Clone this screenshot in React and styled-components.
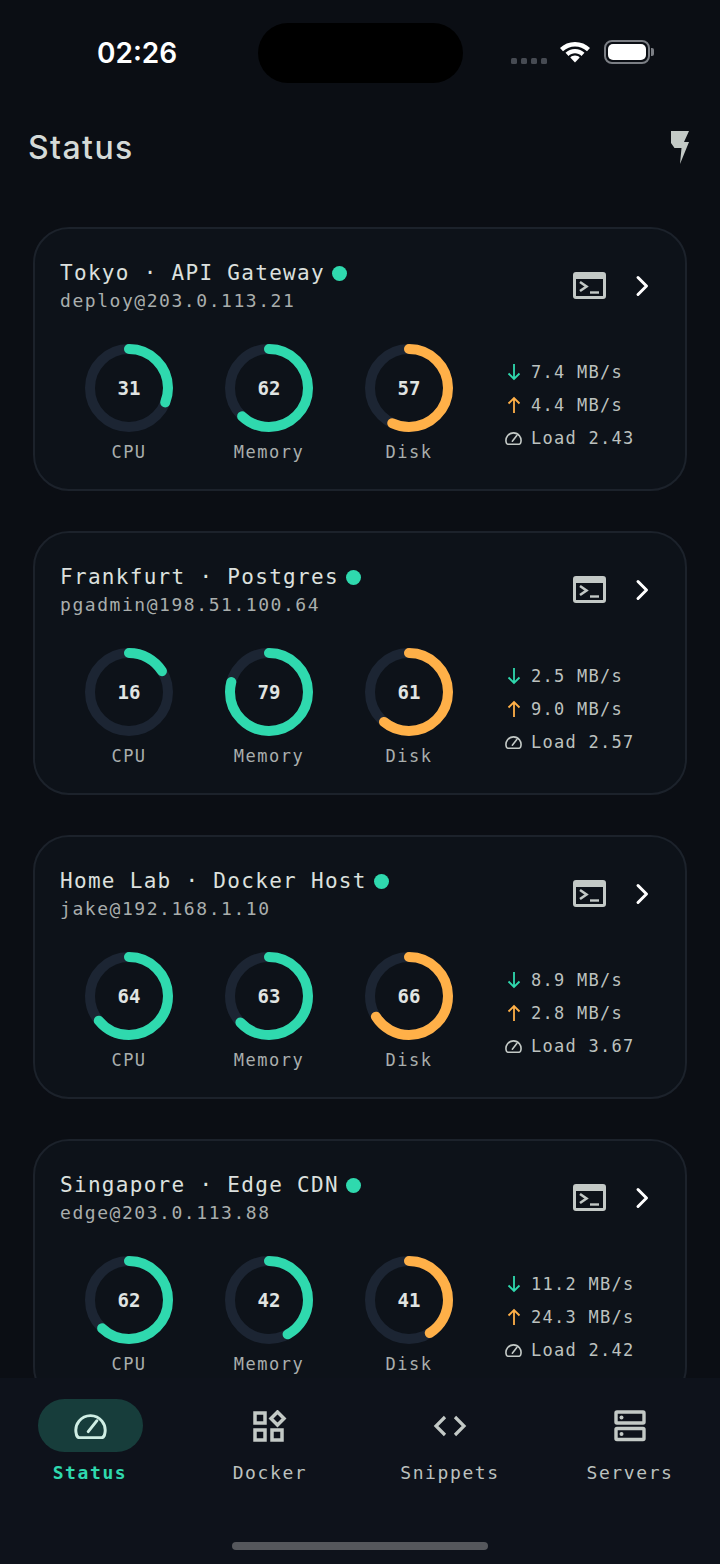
import React from 'react'
import styled, { createGlobalStyle } from 'styled-components'

const TEAL = '#2fd9ae'
const ORANGE = '#ffb048'

const servers = [
  { name: 'Tokyo · API Gateway', login: 'deploy@203.0.113.21', cpu: 31, mem: 62, disk: 57, down: '7.4', up: '4.4', load: '2.43' },
  { name: 'Frankfurt · Postgres', login: 'pgadmin@198.51.100.64', cpu: 16, mem: 79, disk: 61, down: '2.5', up: '9.0', load: '2.57' },
  { name: 'Home Lab · Docker Host', login: 'jake@192.168.1.10', cpu: 64, mem: 63, disk: 66, down: '8.9', up: '2.8', load: '3.67' },
  { name: 'Singapore · Edge CDN', login: 'edge@203.0.113.88', cpu: 62, mem: 42, disk: 41, down: '11.2', up: '24.3', load: '2.42' },
]

function GaugeIcon({ size, color, width }) {
  return (
    <svg width={size} height={(size * 30) / 36} viewBox="0 0 36 30" fill="none" stroke={color} strokeWidth={width} strokeLinejoin="round">
      <path d="M6 28H30Q33 28 33.600 23.500A16 16 0 1 0 2.400 23.500Q3 28 6 28z" />
      <path d="M15.500 21.500L25 9.500" strokeLinecap="round" />
    </svg>
  )
}

function Ring({ value, color }) {
  const r = 39
  const c = 2 * Math.PI * r
  return (
    <svg width="90" height="90" viewBox="0 0 90 90">
      <circle cx="45" cy="45" r={r} fill="none" stroke="#1c2533" strokeWidth="10" />
      <circle
        cx="45" cy="45" r={r} fill="none" stroke={color} strokeWidth="10" strokeLinecap="round"
        strokeDasharray={`${(c * value) / 100} ${c}`}
        transform="rotate(-90 45 45)"
      />
    </svg>
  )
}

function Meter({ value, label, color }) {
  return (
    <MeterBox>
      <RingWrap>
        <Ring value={value} color={color} />
        <RingValue>{value}</RingValue>
      </RingWrap>
      <MeterLabel>{label}</MeterLabel>
    </MeterBox>
  )
}

function ServerCard({ s }) {
  return (
    <Card>
      <CardTop>
        <div>
          <TitleRow>
            <Title>{s.name}</Title>
            <Dot />
          </TitleRow>
          <Login>{s.login}</Login>
        </div>
        <Actions>
          <svg width="33" height="27" viewBox="0 0 33 27">
            <path fillRule="evenodd" fill="#c3c9c6" d="M3 0h27a3 3 0 0 1 3 3v21a3 3 0 0 1-3 3H3a3 3 0 0 1-3-3V3a3 3 0 0 1 3-3zM3 7v17h27V7z" />
            <path d="M7 10l6.500 4.500L7 19" fill="none" stroke="#c3c9c6" strokeWidth="2.600" />
            <path d="M17 20.500h9" fill="none" stroke="#c3c9c6" strokeWidth="2.400" />
          </svg>
          <svg width="16" height="22" viewBox="0 0 16 22" fill="none">
            <path d="M3 2.500L11.500 11 3 19.500" stroke="#fff" strokeWidth="3" strokeLinecap="round" strokeLinejoin="round" />
          </svg>
        </Actions>
      </CardTop>
      <CardBody>
        <Meter value={s.cpu} label="CPU" color={TEAL} />
        <Meter value={s.mem} label="Memory" color={TEAL} />
        <Meter value={s.disk} label="Disk" color={ORANGE} />
        <Stats>
          <StatRow>
            <StatIcon>
              <svg width="14" height="18" viewBox="0 0 14 18" fill="none" stroke={TEAL} strokeWidth="1.800">
                <path d="M7 1v15M1.500 10.500L7 16l5.500-5.500" />
              </svg>
            </StatIcon>
            {s.down} MB/s
          </StatRow>
          <StatRow>
            <StatIcon>
              <svg width="14" height="18" viewBox="0 0 14 18" fill="none" stroke={ORANGE} strokeWidth="1.800">
                <path d="M7 17V2M1.500 7.500L7 2l5.500 5.500" />
              </svg>
            </StatIcon>
            {s.up} MB/s
          </StatRow>
          <StatRow>
            <StatIcon>
              <GaugeIcon size={17} color="#c3c9c6" width={3.4} />
            </StatIcon>
            Load {s.load}
          </StatRow>
        </Stats>
      </CardBody>
    </Card>
  )
}

export default function App() {
  return (
    <Screen>
      <GlobalStyle />
      <StatusBar>
        <Time>02:26</Time>
        <Island />
        <Indicators>
          <SignalDots>
            <i /><i /><i /><i />
          </SignalDots>
          <svg width="32" height="24" viewBox="0 0 32 24" fill="#fff">
            <path d="M16 2C10 2 5 4.300 1 8l3 3.200C7.500 8 11.500 6.400 16 6.400S24.500 8 28 11.200L31 8c-4-3.700-9-6-15-6z" />
            <path d="M16 9c-3.800 0-7 1.400-9.500 3.800l3 3.200c1.800-1.700 4-2.700 6.500-2.700s4.700 1 6.500 2.700l3-3.200C23 10.400 19.800 9 16 9z" />
            <path d="M16 15.500c-1.900 0-3.500.7-4.700 1.900L16 22.500l4.700-5.100c-1.200-1.200-2.800-1.900-4.700-1.900z" />
          </svg>
          <Battery>
            <BatteryFill />
          </Battery>
        </Indicators>
      </StatusBar>
      <Header>
        <PageTitle>Status</PageTitle>
        <svg width="20" height="34" viewBox="0 0 20 34" fill="#c3c9c6">
          <path d="M1 1h18l-5 11h5L10 34l1.500-16H4.500L1 13z" />
        </svg>
      </Header>
      <List>
        {servers.map(s => <ServerCard key={s.name} s={s} />)}
      </List>
      <Nav>
        <NavItems>
          <NavItem>
            <NavIcon $active>
              <GaugeIcon size={33} color="#cfeee4" width={3.2} />
            </NavIcon>
            <NavLabel $active>Status</NavLabel>
          </NavItem>
          <NavItem>
            <NavIcon>
              <svg width="34" height="32" viewBox="0 0 34 32" fill="none" stroke="#c3c9c6" strokeWidth="3.500">
                <rect x="2" y="3" width="10" height="10" />
                <rect x="2" y="20" width="10" height="10" />
                <rect x="19" y="20" width="10" height="10" />
                <path d="M24.500 2l6.500 6.500-6.500 6.500-6.500-6.500z" />
              </svg>
            </NavIcon>
            <NavLabel>Docker</NavLabel>
          </NavItem>
          <NavItem>
            <NavIcon>
              <svg width="34" height="24" viewBox="0 0 34 24" fill="none" stroke="#c3c9c6" strokeWidth="3.200">
                <path d="M12 3L3 12l9 9M22 3l9 9-9 9" />
              </svg>
            </NavIcon>
            <NavLabel>Snippets</NavLabel>
          </NavItem>
          <NavItem>
            <NavIcon>
              <svg width="32" height="32" viewBox="0 0 32 32" fill="none" stroke="#c3c9c6" strokeWidth="3.400">
                <rect x="2" y="2" width="28" height="11" rx="1" />
                <rect x="2" y="18.500" width="28" height="11" rx="1" />
                <circle cx="7.500" cy="7.500" r="2" fill="#c3c9c6" stroke="none" />
                <circle cx="7.500" cy="24" r="2" fill="#c3c9c6" stroke="none" />
              </svg>
            </NavIcon>
            <NavLabel>Servers</NavLabel>
          </NavItem>
        </NavItems>
        <HomeBar />
      </Nav>
    </Screen>
  )
}

const GlobalStyle = createGlobalStyle`
  html, body { margin: 0; padding: 0; background: #0b0e14; }
  * { box-sizing: border-box; }
`

const Screen = styled.div`
  width: 720px;
  height: 1564px;
  display: flex;
  flex-direction: column;
  overflow: hidden;
  background: #0b0e14;
  font-family: "DejaVu Sans Mono", "Liberation Mono", monospace;
`

const StatusBar = styled.div`
  height: 106px;
  flex: none;
  padding-top: 23px;
  display: flex;
  align-items: flex-start;
`

const Time = styled.div`
  width: 258px;
  padding: 14px 0 0 97px;
  font-family: Inter, "Liberation Sans", sans-serif;
  font-size: 28px;
  font-weight: 600;
  line-height: 32px;
  color: #fff;
`

const Island = styled.div`
  width: 205px;
  height: 60px;
  border-radius: 30px;
  background: #000;
`

const Indicators = styled.div`
  display: flex;
  align-items: center;
  padding: 17px 0 0 48px;
`

const SignalDots = styled.div`
  display: flex;
  gap: 4px;
  margin: 18px 12px 0 0;

  i {
    width: 6px;
    height: 6px;
    border-radius: 1.500px;
    background: #464a52;
  }
`

const Battery = styled.div`
  position: relative;
  width: 46px;
  height: 24px;
  margin-left: 13px;
  border: 2px solid #7b7e84;
  border-radius: 8px;
  padding: 2px;

  &::after {
    content: '';
    position: absolute;
    right: -6px;
    top: 6px;
    width: 3px;
    height: 8px;
    border-radius: 0 2px 2px 0;
    background: #7b7e84;
  }
`

const BatteryFill = styled.div`
  width: 100%;
  height: 100%;
  border-radius: 5px;
  background: #fff;
`

const Header = styled.div`
  flex: none;
  height: 84px;
  padding: 0 30px 2px 28px;
  display: flex;
  align-items: center;
  justify-content: space-between;
`

const PageTitle = styled.div`
  font-family: Inter, "Liberation Sans", sans-serif;
  font-size: 32px;
  font-weight: 500;
  letter-spacing: 1.400px;
  color: #d5dad7;
`

const List = styled.div`
  flex: 1;
  min-height: 0;
  overflow: hidden;
  padding: 37px 33px 0 33px;
  display: flex;
  flex-direction: column;
  gap: 40px;
`

const Card = styled.div`
  flex: none;
  height: 264px;
  padding: 30px 34px 0 25px;
  background: #0d1219;
  border: 2px solid #1c222b;
  border-radius: 36px;
`

const CardTop = styled.div`
  display: flex;
  justify-content: space-between;
  align-items: flex-start;
`

const TitleRow = styled.div`
  display: flex;
  align-items: center;
  gap: 7px;
`

const Title = styled.div`
  font-size: 21px;
  line-height: 28px;
  letter-spacing: 1.300px;
  color: #dce0de;
  white-space: pre;
`

const Dot = styled.span`
  width: 15px;
  height: 15px;
  border-radius: 50%;
  background: ${TEAL};
`

const Login = styled.div`
  font-size: 18px;
  line-height: 28px;
  letter-spacing: 1.550px;
  color: #a9aead;
`

const Actions = styled.div`
  display: flex;
  align-items: center;
  gap: 29px;
  margin-top: 13px;
`

const CardBody = styled.div`
  display: flex;
  align-items: flex-start;
  margin: 28px 0 0 -1px;
`

const MeterBox = styled.div`
  width: 140px;
  display: flex;
  flex-direction: column;
  align-items: center;
`

const RingWrap = styled.div`
  position: relative;
  width: 90px;
  height: 90px;
`

const RingValue = styled.div`
  position: absolute;
  inset: 0;
  display: flex;
  align-items: center;
  justify-content: center;
  font-size: 19px;
  font-weight: 700;
  color: #e0e4e2;
`

const MeterLabel = styled.div`
  margin-top: 5px;
  font-size: 17px;
  line-height: 28px;
  letter-spacing: 1.500px;
  color: #a9aead;
`

const Stats = styled.div`
  margin: 15px 0 0 25px;
  display: flex;
  flex-direction: column;
  gap: 5px;
`

const StatRow = styled.div`
  display: flex;
  align-items: center;
  height: 28px;
  font-size: 17px;
  letter-spacing: 1.250px;
  color: #bcc1bf;
  white-space: pre;
`

const StatIcon = styled.span`
  width: 27px;
  flex: none;
  display: flex;
  justify-content: center;
  padding-right: 8px;
`

const Nav = styled.div`
  flex: none;
  height: 186px;
  background: #0e121b;
  display: flex;
  flex-direction: column;
`

const NavItems = styled.div`
  display: grid;
  grid-template-columns: repeat(4, 180px);
  padding-top: 21px;
`

const NavItem = styled.div`
  display: flex;
  flex-direction: column;
  align-items: center;
`

const NavIcon = styled.div`
  width: 105px;
  height: 53px;
  border-radius: 27px;
  display: flex;
  align-items: center;
  justify-content: center;
  background: ${p => (p.$active ? '#173d3b' : 'transparent')};
`

const NavLabel = styled.div`
  margin-top: 7px;
  font-size: 18px;
  line-height: 28px;
  letter-spacing: 1.600px;
  font-weight: ${p => (p.$active ? 700 : 400)};
  color: ${p => (p.$active ? TEAL : '#bcc1bf')};
`

const HomeBar = styled.div`
  width: 256px;
  height: 8px;
  border-radius: 4px;
  background: #55575c;
  margin: 55px auto 0;
`
